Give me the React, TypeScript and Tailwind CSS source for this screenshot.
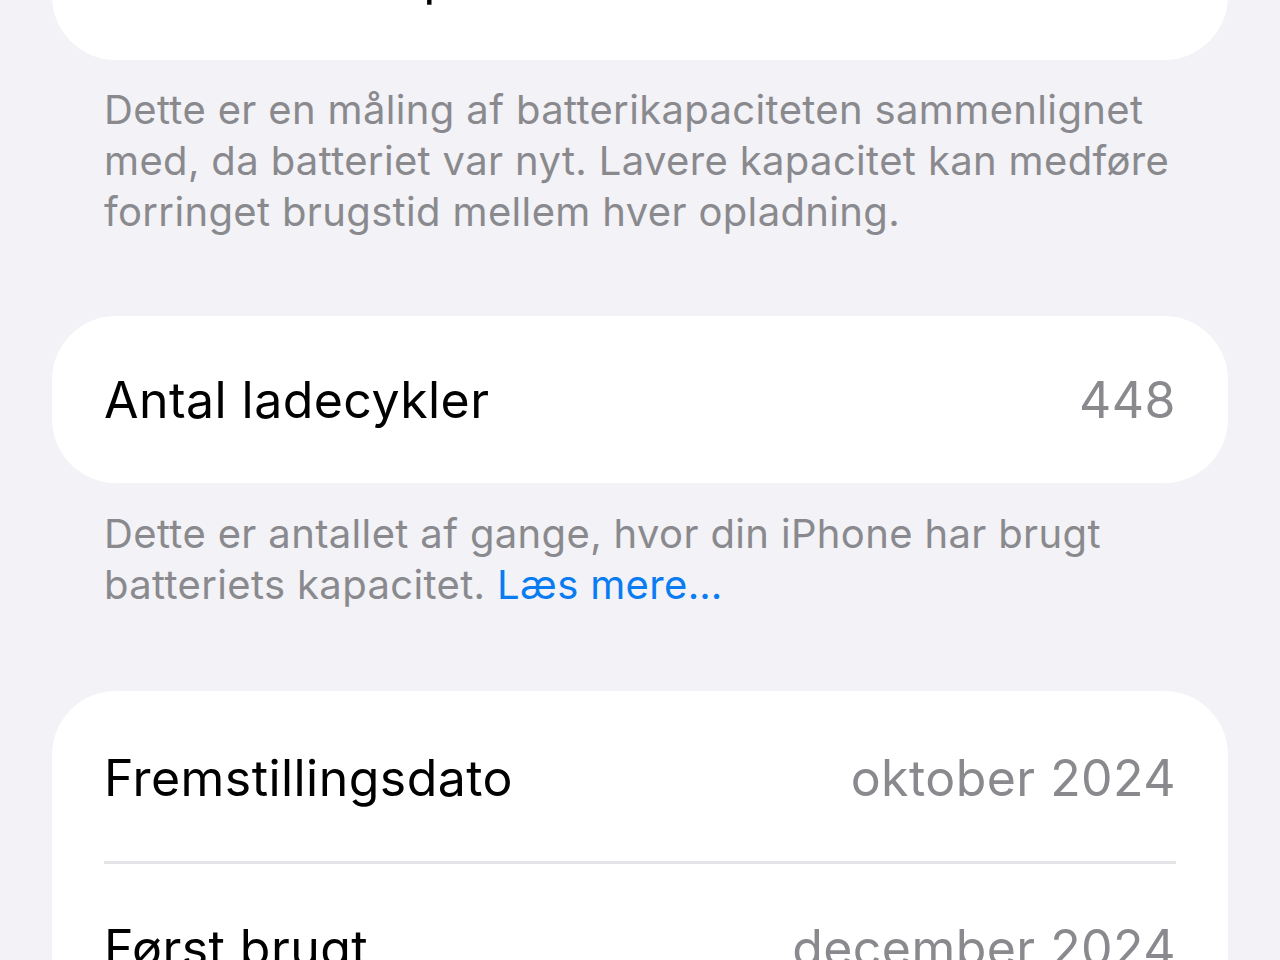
import React from "react";

const font = { fontFamily: "Inter, 'Noto Sans', sans-serif" };

function Row({ label, value, labelClass = "tracking-[0.45px]" }: { label: string; value: string; labelClass?: string }) {
  return (
    <div className="flex h-[167px] items-center justify-between">
      <span className={`text-[50px] leading-none text-black ${labelClass}`}>{label}</span>
      <span className="text-[50px] leading-none tracking-[0.45px] text-[#8a8a8e]">{value}</span>
    </div>
  );
}

export default function App() {
  return (
    <div className="h-[960px] w-full overflow-hidden bg-[#f2f2f7]" style={font}>
      <div className="px-[52px]">
        {/* Maximum capacity card, scrolled mostly out of view */}
        <div className="-mt-[107px] rounded-[64px] bg-white px-[52px]">
          <Row label="Maksimal kapacitet" value="89 %" labelClass="tracking-[2.4px]" />
        </div>
        <p className="mt-[24px] px-[52px] text-[40px] leading-[51px] tracking-[0.35px] text-[#8a8a8e]">
          Dette er en måling af batterikapaciteten sammenlignet med, da batteriet var nyt. Lavere kapacitet kan medføre forringet brugstid mellem hver opladning.
        </p>

        <div className="mt-[79px] rounded-[64px] bg-white px-[52px]">
          <Row label="Antal ladecykler" value="448" />
        </div>
        <p className="mt-[25px] px-[52px] text-[40px] leading-[51px] tracking-[0.35px] text-[#8a8a8e]">
          Dette er antallet af gange, hvor din iPhone har brugt batteriets kapacitet.{" "}
          <span className="text-[#0a7cf2]">Læs mere…</span>
        </p>

        <div className="mt-[81px] rounded-[64px] bg-white px-[52px]">
          <div className="pt-[3px]">
            <Row label="Fremstillingsdato" value="oktober 2024" />
          </div>
          <div className="h-[3px] bg-[#e3e3e8]" />
          <Row label="Først brugt" value="december 2024" />
        </div>
      </div>
    </div>
  );
}
